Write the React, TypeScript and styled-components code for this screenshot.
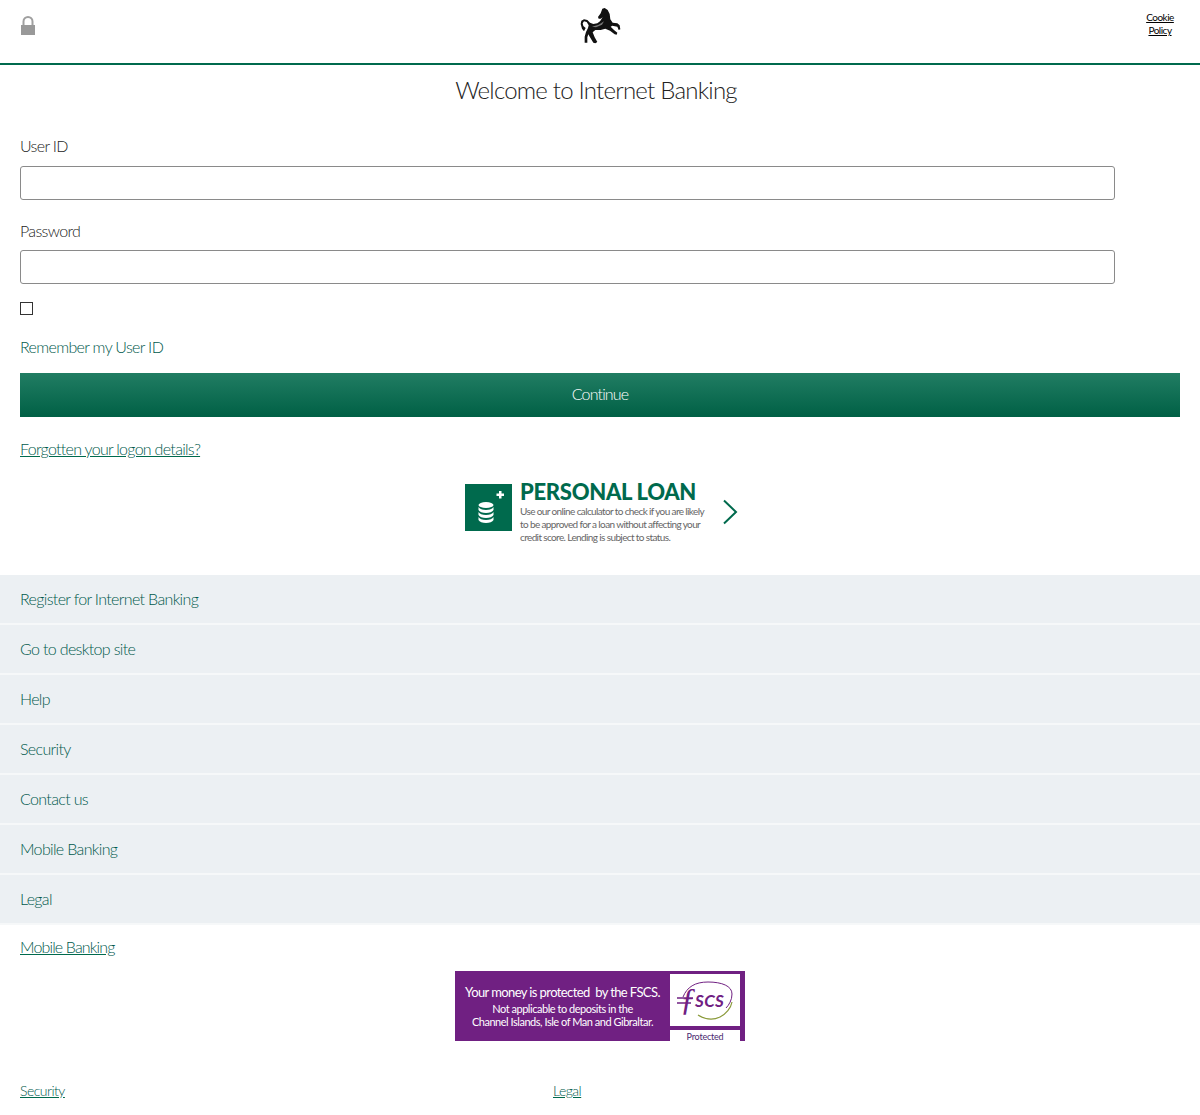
import React from 'react'
import styled, { createGlobalStyle } from 'styled-components'

const GlobalStyle = createGlobalStyle`
    html, body {
        margin: 0;
        padding: 0;
        background: #fff;
    }
    body {
        font-family: Lato, "Open Sans", "Liberation Sans", sans-serif;
        font-weight: 300;
        font-size: 16px;
        letter-spacing: -0.65px;
        color: #222;
    }
`

const Page = styled.div`
    width: 1200px;
    height: 1115px;
    overflow: hidden;
`

const Header = styled.header`
    height: 63px;
    border-bottom: 2px solid #006a4d;
    display: grid;
    grid-template-columns: 1fr 80px 1fr;
    padding: 0 20px;
`

const LockWrap = styled.div`
    padding-top: 16px;
`

const HorseWrap = styled.div`
    display: flex;
    justify-content: center;
`

const CookieLink = styled.a`
    justify-self: end;
    width: 40px;
    margin-top: 11px;
    font-size: 10px;
    font-weight: 400;
    letter-spacing: -0.5px;
    line-height: 13px;
    text-align: center;
    color: #000;
    text-decoration: underline;
`

const Title = styled.h1`
    margin: 0;
    padding: 10px 8px 0 0;
    font-size: 24px;
    line-height: 30px;
    font-weight: 300;
    letter-spacing: -0.78px;
    text-align: center;
    color: #222;
`

const Form = styled.form`
    padding: 31px 20px 0;
    display: flex;
    flex-direction: column;
`

const Label = styled.label<{ $gap: number }>`
    display: block;
    height: 20px;
    line-height: 19px;
    margin-bottom: ${p => p.$gap}px;
`

const TextInput = styled.input`
    display: block;
    box-sizing: border-box;
    width: 1095px;
    height: 34px;
    margin-bottom: 21px;
    border: 1px solid #8a8a8a;
    border-radius: 3px;
    background: #fff;
`

const CheckBox = styled.span`
    display: block;
    box-sizing: border-box;
    width: 13px;
    height: 13px;
    margin-top: -3px;
    border: 1px solid #333;
`

const Remember = styled.div`
    margin-top: 22px;
    line-height: 20px;
    color: #00594c;
`

const ContinueButton = styled.button`
    height: 44px;
    margin-top: 16px;
    border: 0;
    padding: 0 0 3px;
    background: linear-gradient(to bottom, #217d63, #006045);
    color: #fff;
    font: inherit;
    letter-spacing: -0.85px;
`

const TextLink = styled.a`
    color: #00594c;
    text-decoration: underline;
    text-decoration-color: #006a4d;
`

const ForgotRow = styled.div`
    padding: 22px 20px 0;
    line-height: 19px;
    height: 21px;
    letter-spacing: -0.7px;
`

const Promo = styled.div`
    display: flex;
    justify-content: center;
    height: 115px;
    padding: 14px 0 0 3px;
    box-sizing: border-box;
`

const PromoIcon = styled.div`
    width: 47px;
    height: 47px;
    margin-top: 10px;
    background: #006a4d;
`

const PromoText = styled.div`
    width: 202px;
    margin-left: 8px;
    padding-top: 4px;
`

const PromoTitle = styled.div`
    font-size: 22px;
    line-height: 28px;
    font-weight: 900;
    color: #006a4d;
    letter-spacing: -0.3px;
    white-space: nowrap;
`

const PromoBody = styled.div`
    font-size: 10px;
    line-height: 13px;
    font-weight: 400;
    letter-spacing: -0.62px;
    color: #666;
    margin-top: -1px;
    white-space: nowrap;
`

const Chevron = styled.div`
    padding-top: 25px;
`

const NavList = styled.nav`
    display: flex;
    flex-direction: column;
`

const NavRow = styled.a`
    box-sizing: border-box;
    height: 50px;
    padding: 0 20px 1px;
    display: flex;
    align-items: center;
    background: #ecf0f3;
    border-bottom: 2px solid #f6f8f9;
    color: #00594c;
    text-decoration: none;
`

const MobileRow = styled.div`
    padding: 12px 20px 0;
    line-height: 20px;
    letter-spacing: -0.85px;
`

const Fscs = styled.div`
    box-sizing: border-box;
    display: flex;
    width: 290px;
    height: 70px;
    margin: 14px auto 0;
    padding: 3px 5px 0 0;
    background: #702082;
    color: #fff;
    overflow: hidden;
`

const FscsText = styled.div`
    width: 215px;
    text-align: center;
    font-weight: 400;
    font-size: 11px;
    line-height: 13px;
    letter-spacing: -0.47px;
    padding-top: 10px;
    white-space: nowrap;
`

const FscsLead = styled.div`
    font-size: 13px;
    line-height: 16px;
    letter-spacing: -0.6px;
    margin-bottom: 2px;
`

const FscsBadge = styled.div`
    width: 70px;
    display: flex;
    flex-direction: column;
    gap: 4px;
`

const FscsLogo = styled.div`
    height: 52px;
    background: #fff;
`

const FscsProtected = styled.div`
    height: 14px;
    background: #fff;
    color: #4a2a70;
    font-size: 9px;
    line-height: 14px;
    font-weight: 400;
    letter-spacing: -0.2px;
    text-align: center;
`

const FooterLinks = styled.div`
    display: grid;
    grid-template-columns: 533px 1fr;
    justify-items: start;
    padding: 40px 20px 0;
    font-size: 14px;
    line-height: 20px;
    letter-spacing: -0.5px;
`

const LockIcon = () => (
    <svg width="16" height="20" viewBox="0 0 16 20">
        <path d="M3.5 10V5.5a4.5 4.5 0 0 1 9 0V10" fill="none" stroke="#a0a0a0" strokeWidth="2" />
        <rect x="1" y="9" width="14" height="10" fill="#999" />
    </svg>
)

const Horse = () => (
    <svg width="80" height="60" viewBox="0 0 240 180">
        <path
            fill="#111"
            d="M127 26L134 24L143 30L149 42L151 58L158 68L172 70L179 76L181 88L176 90L172 80L157 77L152 80L162 90L172 98L170 104L164 103L150 92L136 86L122 90L106 90L98 97L104 112L112 126L106 130L100 128L90 112L85 103L82 112L82 128L74 128L74 110L78 96L84 84L86 76L80 66L72 64L68 70L70 78L77 84L72 94L66 86L62 72L64 62L72 58L82 60L90 68L100 72L112 70L120 64L128 52L122 56L116 56L114 51L122 40Z"
        />
        <path d="M96 80L116 74L132 64L126 74L108 82Z" fill="#777" />
    </svg>
)

const CoinsIcon = () => (
    <svg width="47" height="47" viewBox="0 0 47 47">
        <g fill="#fff">
            <ellipse cx="21" cy="21" rx="7.5" ry="3" />
            <path d="M13.5 23c1 2 4 3 7.500 3s6.500-1 7.500-3v3c-1 2-4 3-7.500 3s-6.500-1-7.500-3z" />
            <path d="M13.500 28c1 2 4 3 7.500 3s6.500-1 7.500-3v3c-1 2-4 3-7.500 3s-6.500-1-7.500-3z" />
            <path d="M13.500 33c1 2 4 3 7.500 3s6.500-1 7.500-3v3c-1 2-4 3-7.500 3s-6.500-1-7.500-3z" />
            <path d="M34 7h2.500v2.500H39V12h-2.500v2.500H34V12h-2.500V9.500H34z" />
        </g>
    </svg>
)

const ChevronIcon = () => (
    <svg width="16" height="26" viewBox="0 0 16 26">
        <path d="M2 1.500L14 13L2 24.500" fill="none" stroke="#006a4d" strokeWidth="2" />
    </svg>
)

const FscsMark = () => (
    <svg width="70" height="52" viewBox="0 0 70 52">
        <path d="M13 23C17 13 25 8 38 8C52 8 62 12 62 20C62 26 59 31 56 34" fill="none" stroke="#702082" strokeWidth="1" />
        <path d="M28 41C36 46 44 46 50 43C56 40 61 34 62 28" fill="none" stroke="#8a9a3a" strokeWidth="1.2" />
        <text x="10" y="36" fontSize="32" fontStyle="italic" fontFamily="Liberation Serif, serif" fill="#702082">ƒ</text>
        <path d="M7 24H23M7 29H21" stroke="#702082" strokeWidth="1.6" />
        <text x="25" y="33" fontSize="17" fontStyle="italic" fontWeight="700" letterSpacing="0.4" fontFamily="Lato, sans-serif" fill="#702082">SCS</text>
    </svg>
)

const navItems = [
    'Register for Internet Banking',
    'Go to desktop site',
    'Help',
    'Security',
    'Contact us',
    'Mobile Banking',
    'Legal',
]

export default function App() {
    return (
        <Page>
            <GlobalStyle />
            <Header>
                <LockWrap><LockIcon /></LockWrap>
                <HorseWrap><Horse /></HorseWrap>
                <CookieLink href="#">Cookie Policy</CookieLink>
            </Header>
            <Title>Welcome to Internet Banking</Title>
            <Form>
                <Label $gap={10}>User ID</Label>
                <TextInput type="text" />
                <Label $gap={9}>Password</Label>
                <TextInput type="password" />
                <CheckBox />
                <Remember>Remember my User ID</Remember>
                <ContinueButton type="button">Continue</ContinueButton>
            </Form>
            <ForgotRow><TextLink href="#">Forgotten your logon details?</TextLink></ForgotRow>
            <Promo>
                <PromoIcon><CoinsIcon /></PromoIcon>
                <PromoText>
                    <PromoTitle>PERSONAL LOAN</PromoTitle>
                    <PromoBody>
                        Use our online calculator to check if you are likely<br />
                        to be approved for a loan without affecting your<br />
                        credit score. Lending is subject to status.
                    </PromoBody>
                </PromoText>
                <Chevron><ChevronIcon /></Chevron>
            </Promo>
            <NavList>
                {navItems.map(item => (
                    <NavRow href="#" key={item}>{item}</NavRow>
                ))}
            </NavList>
            <MobileRow><TextLink href="#">Mobile Banking</TextLink></MobileRow>
            <Fscs>
                <FscsText>
                    <FscsLead>Your money is protected&nbsp; by the FSCS.</FscsLead>
                    Not applicable to deposits in the<br />
                    Channel Islands, Isle of Man and Gibraltar.
                </FscsText>
                <FscsBadge>
                    <FscsLogo><FscsMark /></FscsLogo>
                    <FscsProtected>Protected</FscsProtected>
                </FscsBadge>
            </Fscs>
            <FooterLinks>
                <TextLink href="#">Security</TextLink>
                <TextLink href="#">Legal</TextLink>
            </FooterLinks>
        </Page>
    )
}
